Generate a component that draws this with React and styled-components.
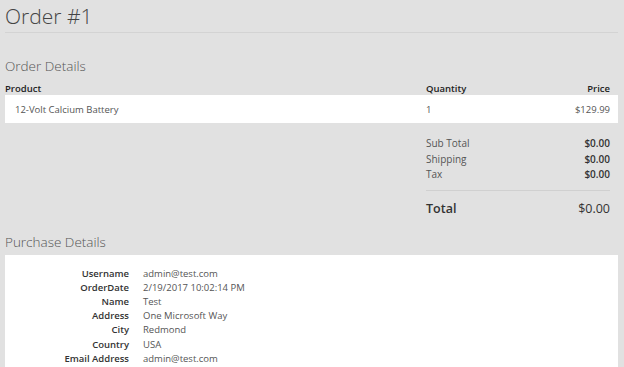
import styled, { createGlobalStyle } from 'styled-components';

const GlobalStyle = createGlobalStyle`
  html, body {
    margin: 0;
    padding: 0;
    background: #e1e1e1;
    font-family: "Open Sans", "Segoe UI", sans-serif;
    color: #444;
  }
`;

const Page = styled.div`
  padding: 0 6px 0 5px;
  height: 367px;
  overflow: hidden;
`;

const Title = styled.h1`
  font-weight: 300;
  font-size: 21px;
  color: #444;
  margin: 0;
  line-height: 32px;
  border-bottom: 1px solid #d3d3d3;
`;

const Section = styled.h2`
  font-weight: 300;
  font-size: 13.5px;
  color: #555;
  margin: 0;
  line-height: 18px;
  padding-top: ${p => p.$top}px;
`;

const Row = styled.div`
  display: grid;
  grid-template-columns: 1fr 110px 74px;
  font-size: 9.5px;
`;

const HeadRow = styled(Row)`
  padding: 8px 8px 0 0;
  font-weight: 600;
  color: #222;
  line-height: 12px;
`;

const ItemRow = styled(Row)`
  background: #fff;
  padding: 0 8px 0 10px;
  height: 28px;
  align-items: center;
  color: #555;
`;

const Right = styled.span`
  text-align: right;
`;

const Totals = styled.div`
  margin-left: auto;
  width: 184px;
  margin-right: 8px;
  padding-top: 13px;
  font-size: 10px;
`;

const TotalLine = styled.div`
  display: flex;
  justify-content: space-between;
  line-height: 15.5px;
  color: #555;
  b {
    font-weight: 600;
    color: #333;
  }
`;

const GrandTotal = styled(TotalLine)`
  border-top: 1px solid #d0d0d0;
  margin-top: 7px;
  padding-top: 9px;
  font-size: 12.5px;
  line-height: 18px;
  font-weight: 600;
  color: #333;
  span:last-child {
    font-weight: 400;
  }
`;

const Panel = styled.div`
  background: #fff;
  margin-top: 4px;
  padding: 12px 0 20px;
  display: grid;
  grid-template-columns: 124px 1fr;
  column-gap: 14px;
  font-size: 9.5px;
  line-height: 14.2px;
`;

const Label = styled.span`
  text-align: right;
  font-weight: 600;
  color: #333;
`;

const Value = styled.span`
  color: #555;
`;

const details = [
  ['Username', 'admin@test.com'],
  ['OrderDate', '2/19/2017 10:02:14 PM'],
  ['Name', 'Test'],
  ['Address', 'One Microsoft Way'],
  ['City', 'Redmond'],
  ['Country', 'USA'],
  ['Email Address', 'admin@test.com'],
];

export default function App() {
  return (
    <Page>
      <GlobalStyle />
      <Title>Order #1</Title>
      <Section $top={24}>Order Details</Section>
      <HeadRow>
        <span>Product</span>
        <span>Quantity</span>
        <Right>Price</Right>
      </HeadRow>
      <ItemRow>
        <span>12-Volt Calcium Battery</span>
        <span>1</span>
        <Right>$129.99</Right>
      </ItemRow>
      <Totals>
        <TotalLine><span>Sub Total</span><b>$0.00</b></TotalLine>
        <TotalLine><span>Shipping</span><b>$0.00</b></TotalLine>
        <TotalLine><span>Tax</span><b>$0.00</b></TotalLine>
        <GrandTotal><span>Total</span><span>$0.00</span></GrandTotal>
      </Totals>
      <Section $top={15}>Purchase Details</Section>
      <Panel>
        {details.flatMap(([k, v]) => [
          <Label key={k}>{k}</Label>,
          <Value key={k + '-v'}>{v}</Value>,
        ])}
      </Panel>
    </Page>
  );
}
